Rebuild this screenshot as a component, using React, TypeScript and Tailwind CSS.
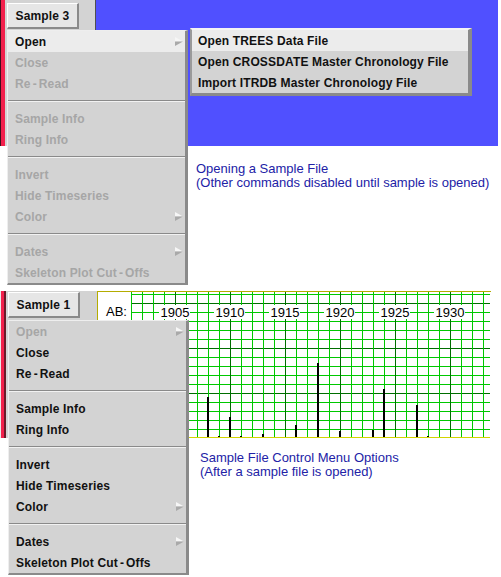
import React from "react";

type MI = { t: string; d?: boolean; a?: boolean; h?: boolean } | null;

function Arrow() {
  return (
    <svg width="8" height="9" viewBox="0 0 8 9" className="absolute right-[2px] top-[6px]">
      <polygon points="0,0 8,4.5 0,4.5" fill="#f6f6f6" />
      <polygon points="0,4.5 8,4.5 0,9" fill="#a9a9a9" />
    </svg>
  );
}

function Label({ t }: { t: string }) {
  const parts = t.split("-");
  if (parts.length === 1) return <>{t}</>;
  return (
    <>
      {parts[0]}
      <span className="mx-[2px]">-</span>
      {parts[1]}
    </>
  );
}

function MenuRows({ items }: { items: MI[] }) {
  return (
    <>
      {items.map((it, i) =>
        it === null ? (
          <div key={i} className="h-[14px] flex flex-col justify-center">
            <div className="h-px bg-[#8a8a8a]" />
            <div className="h-px bg-[#f2f2f2]" />
          </div>
        ) : (
          <div
            key={i}
            className={
              "relative h-[21px] flex items-center pl-[7px] text-[12px] tracking-[0.15px] font-bold whitespace-nowrap " +
              (it.h ? "bg-[#ececec] " : "") +
              (it.d ? "text-[#a6a6a6]" : "text-[#111111]")
            }
          >
            <span>
              <Label t={it.t} />
            </span>
            {it.a ? <Arrow /> : null}
          </div>
        )
      )}
    </>
  );
}

const topItems: MI[] = [
  { t: "Open", a: true, h: true },
  { t: "Close", d: true },
  { t: "Re-Read", d: true },
  null,
  { t: "Sample Info", d: true },
  { t: "Ring Info", d: true },
  null,
  { t: "Invert", d: true },
  { t: "Hide Timeseries", d: true },
  { t: "Color", d: true, a: true },
  null,
  { t: "Dates", d: true, a: true },
  { t: "Skeleton Plot Cut-Offs", d: true },
];

const bottomItems: MI[] = [
  { t: "Open", d: true, a: true },
  { t: "Close" },
  { t: "Re-Read" },
  null,
  { t: "Sample Info" },
  { t: "Ring Info" },
  null,
  { t: "Invert" },
  { t: "Hide Timeseries" },
  { t: "Color", a: true },
  null,
  { t: "Dates", a: true },
  { t: "Skeleton Plot Cut-Offs" },
];

function SampleButton({ label }: { label: string }) {
  return (
    <div className="w-[72px] h-[26px] bg-[#e6e6e6] border-t border-l border-t-white border-l-white border-r-2 border-b-2 border-r-[#8a8a8a] border-b-[#8a8a8a] flex items-center justify-center text-[12px] tracking-[0.15px] font-bold text-[#111111]">
      {label}
    </div>
  );
}

const bars: [number, number][] = [
  [1908, 397],
  [1909, 436],
  [1910, 417],
  [1911, 436],
  [1913, 434],
  [1916, 425],
  [1918, 363],
  [1920, 431],
  [1923, 430],
  [1924, 389],
  [1927, 405],
  [1928, 436],
];

function Chart() {
  const vx: number[] = [];
  for (let k = 0; k <= 32; k++) vx.push(34 + 11 * k);
  const hy: number[] = [];
  for (let k = 0; k < 16; k++) hy.push(3 + 9 * k);
  const labels = [1905, 1910, 1915, 1920, 1925, 1930];
  return (
    <svg width="395" height="148" viewBox="0 0 395 148" shapeRendering="crispEdges" className="block">
      <rect x="0" y="0" width="395" height="148" fill="#ffffff" />
      {hy.map((y, i) => (
        <rect key={"h" + i} x="34" y={y} width="359" height="1" fill={(y - 12) % 45 === 0 ? "#006e00" : "#00c800"} />
      ))}
      {vx.map((x, i) => (
        <rect key={"v" + i} x={x} y="1" width="1" height="145" fill={(i - 4) % 5 === 0 ? "#006e00" : "#00c800"} />
      ))}
      <rect x="0" y="0" width="394" height="1" fill="#b4ac00" />
      <rect x="0" y="0" width="1" height="148" fill="#b4ac00" />
      <rect x="34" y="146" width="359" height="1" fill="#d4d400" />
      {labels.map((yr) => {
        const x = 34 + 11 * (yr - 1901);
        return (
          <g key={yr}>
            <rect x={x - 16} y="14" width="31" height="14" fill="#ffffff" />
            <text x={x} y="25.5" textAnchor="middle" fontSize="13" fill="#000" fontFamily="'Liberation Sans', Arial, sans-serif" shapeRendering="auto">
              {yr}
            </text>
          </g>
        );
      })}
      {bars.map(([yr, top]) => {
        const x = 34 + 11 * (yr - 1901);
        return <rect key={yr} x={x - 1} y={top - 291} width="2" height={437 - top} fill="#000" />;
      })}
      <text x="9" y="24.5" fontSize="13" fill="#000" fontFamily="'Liberation Sans', Arial, sans-serif">AB:</text>
    </svg>
  );
}

export default function App() {
  return (
    <div className="w-[501px] h-[577px] bg-white overflow-hidden font-['Liberation_Sans',Arial,sans-serif]">
      {/* Section 1 */}
      <div className="relative h-[291px]">
        <div className="flex h-[146px] w-[498px]">
          <div className="w-px bg-[#40101c]" />
          <div className="w-[4px] bg-[#f2204c]" />
          <div className="w-[91px] bg-[#d3d3d3] border-r border-r-[#505050] pt-[3px] pl-[2px]">
            <SampleButton label="Sample 3" />
          </div>
          <div className="flex-1 bg-[#5050ff]" />
        </div>
        <div className="pl-[196px] pt-[16px] text-[13px] leading-[14px] text-[#2222a6]">
          <div>Opening a Sample File</div>
          <div>(Other commands disabled until sample is opened)</div>
        </div>

        <div className="absolute left-[7px] top-[30px] w-[181px] bg-[#d3d3d3] border-t border-l border-t-[#eeeeee] border-l-[#eeeeee] border-r-[3px] border-b-[2px] border-r-[#8a8a8a] border-b-[#8a8a8a]">
          <MenuRows items={topItems} />
        </div>

        <div className="absolute left-[190px] top-[28px] w-[282px] bg-[#d3d3d3] border-t-2 border-l-2 border-t-[#f4f4f4] border-l-[#9a9a9a] border-r-4 border-b-[3px] border-r-[#8a8a8a] border-b-[#8a8a8a]">
          {["Open TREES Data File", "Open CROSSDATE Master Chronology File", "Import ITRDB Master Chronology File"].map((t, i) => (
            <div
              key={t}
              className={
                "h-[21px] flex items-center pl-[6px] text-[12px] tracking-[0.15px] font-bold text-[#111111] whitespace-nowrap " +
                (i === 0 ? "bg-[#ececec]" : "")
              }
            >
              {t}
            </div>
          ))}
        </div>
      </div>

      {/* Section 2 */}
      <div className="relative h-[286px]">
        <div className="flex h-[147px] w-[492px]">
          <div className="w-px bg-[#e8e8e8]" />
          <div className="w-[3px] bg-[#f2204c]" />
          <div className="w-[2px] bg-[#6a1a2a]" />
          <div className="w-[91px] bg-[#d3d3d3] pt-[1px] pl-[2px]">
            <SampleButton label="Sample 1" />
          </div>
          <Chart />
        </div>
        <div className="pl-[200px] pt-[13px] text-[13px] leading-[14px] text-[#2222a6]">
          <div>Sample File Control Menu Options</div>
          <div>(After a sample file is opened)</div>
        </div>

        <div className="absolute left-[8px] top-[29px] w-[181px] bg-[#d3d3d3] border-t border-l border-t-[#eeeeee] border-l-[#eeeeee] border-r-[3px] border-b-[2px] border-r-[#8a8a8a] border-b-[#8a8a8a]">
          <MenuRows items={bottomItems} />
        </div>
      </div>
    </div>
  );
}
